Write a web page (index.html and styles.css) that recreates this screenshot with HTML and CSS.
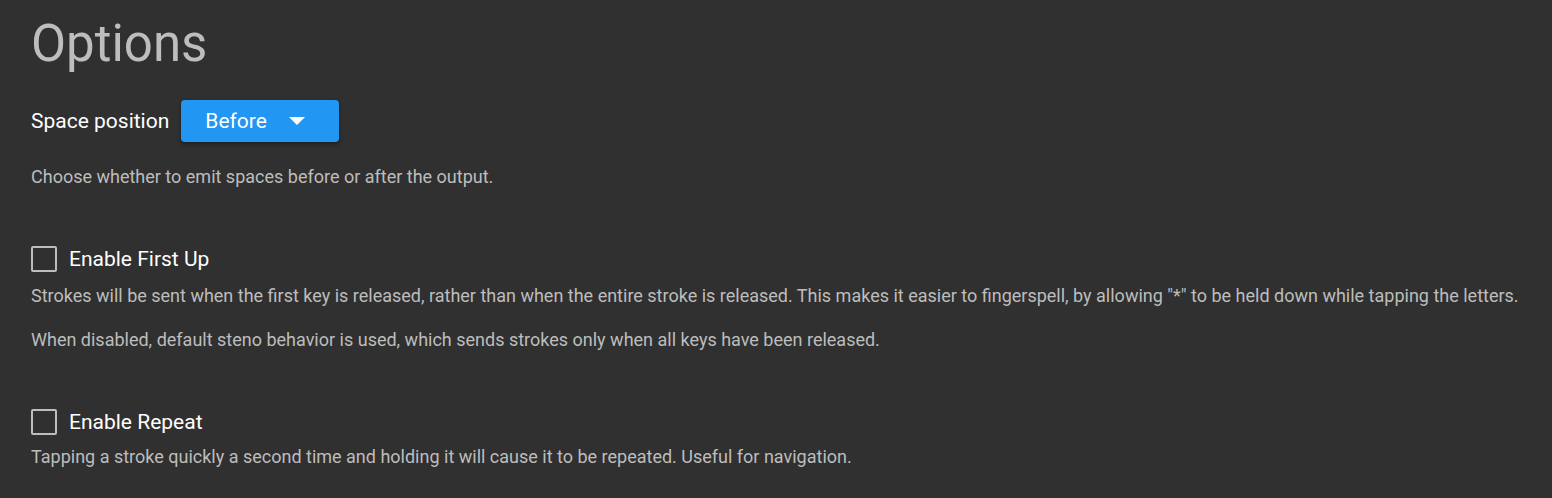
FILE: index.html
```html
<!DOCTYPE html>
<html>
<head>
<meta charset="utf-8">
<link rel="stylesheet" href="styles.css">
</head>
<body>
<main class="page">
  <h1 class="title">Options</h1>
  <section class="option">
    <div class="row">
      <span class="label">Space position</span>
      <button class="select">Before <span class="caret"></span></button>
    </div>
    <p class="desc desc-first">Choose whether to emit spaces before or after the output.</p>
  </section>
  <section class="option">
    <label class="check-row check-first"><span class="box"></span><span class="label">Enable First Up</span></label>
    <p class="desc desc-after-check">Strokes will be sent when the first key is released, rather than when the entire stroke is released. This makes it easier to fingerspell, by allowing "*" to be held down while tapping the letters.</p>
    <p class="desc desc-next">When disabled, default steno behavior is used, which sends strokes only when all keys have been released.</p>
  </section>
  <section class="option">
    <label class="check-row check-second"><span class="box"></span><span class="label">Enable Repeat</span></label>
    <p class="desc desc-after-check2">Tapping a stroke quickly a second time and holding it will cause it to be repeated. Useful for navigation.</p>
  </section>
</main>
</body>
</html>
```
FILE: styles.css
```css
html, body {
  margin: 0;
  padding: 0;
  background: #303030;
  font-family: Roboto, "Noto Sans", sans-serif;
}
.page {
  padding: 14px 31px 0;
}
.title {
  margin: 0;
  font-size: 51px;
  font-weight: 400;
  color: #bdbdbd;
  line-height: 60px;
}
.row {
  display: flex;
  align-items: center;
  gap: 12px;
  margin-top: 26px;
  height: 42px;
}
.label {
  font-size: 21px;
  color: #fff;
}
.select {
  display: flex;
  align-items: center;
  width: 158px;
  height: 42px;
  padding: 0 0 0 24px;
  border: none;
  border-radius: 4px;
  background: #2196f3;
  color: #fff;
  font-family: Roboto, sans-serif;
  font-size: 21px;
  box-shadow: 0 2px 4px rgba(0,0,0,0.4);
}
.caret {
  margin-left: 22px;
  width: 0;
  height: 0;
  border-left: 8px solid transparent;
  border-right: 8px solid transparent;
  border-top: 8px solid #fff;
}
.desc {
  margin: 0;
  font-size: 18px;
  color: #bdbdbd;
  line-height: 24px;
}
.desc-first { margin-top: 23px; }
.check-row {
  display: flex;
  align-items: center;
  gap: 12px;
  height: 26px;
}
.check-first { margin-top: 57px; }
.check-second { margin-top: 57px; }
.box {
  box-sizing: border-box;
  width: 26px;
  height: 26px;
  border: 2px solid #bdbdbd;
  border-radius: 2px;
}
.desc-after-check { margin-top: 12px; }
.desc-next { margin-top: 20px; }
.desc-after-check2 { margin-top: 10px; }
```
